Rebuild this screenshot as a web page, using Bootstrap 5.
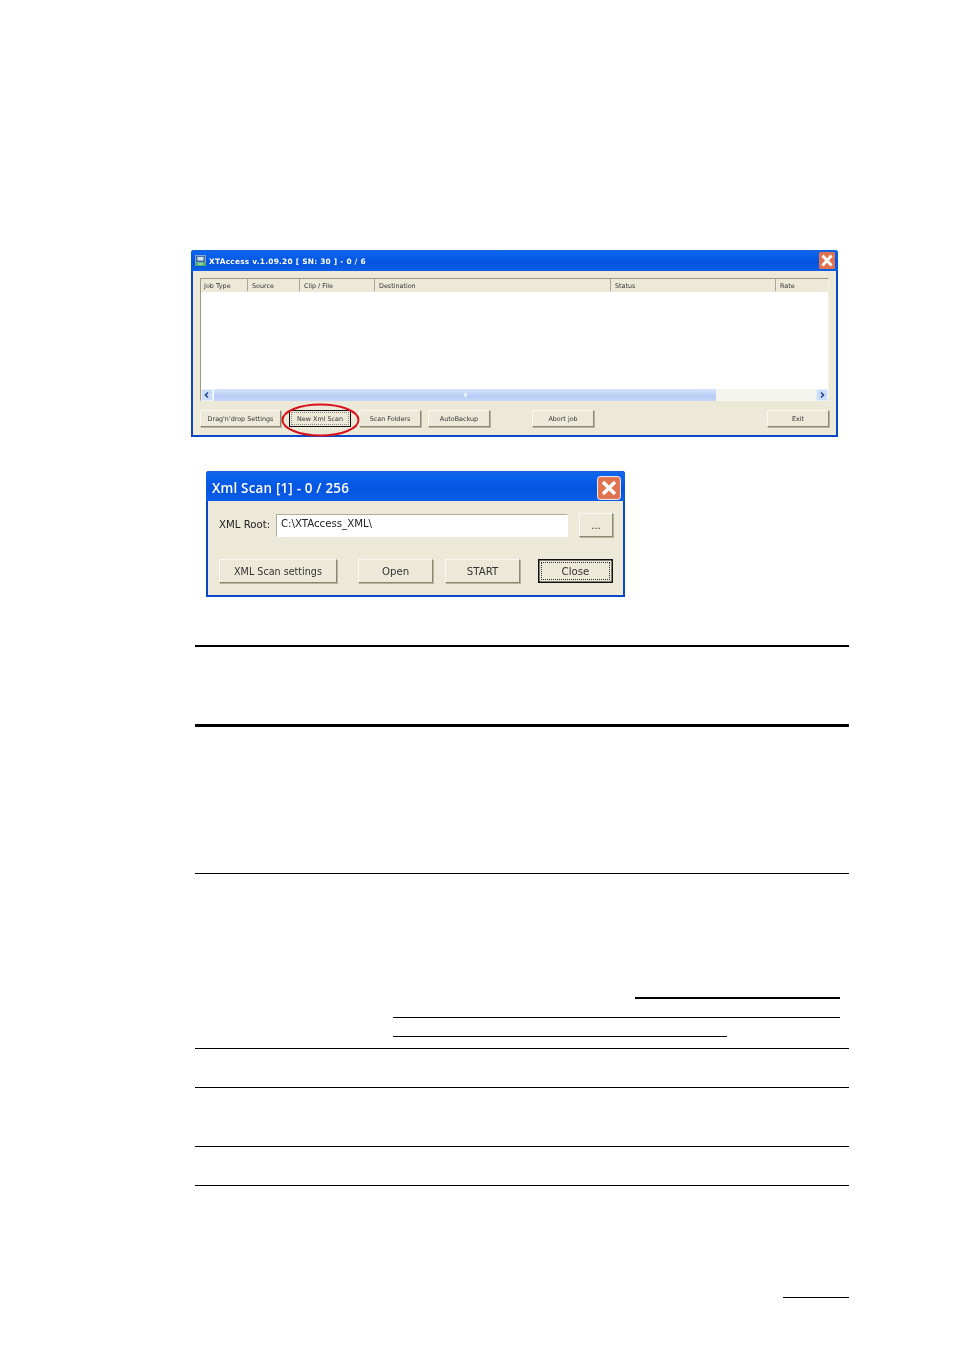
<!DOCTYPE html>
<html lang="en">
<head>
<meta charset="utf-8">
<title>XTAccess</title>
<link href="https://cdn.jsdelivr.net/npm/bootstrap@5.3.0/dist/css/bootstrap.min.css" rel="stylesheet">
<style>
body{background:#fff;margin:0;height:1350px;overflow:hidden;font-family:"DejaVu Sans","Liberation Sans",sans-serif;color:#222}
.sheet{padding-top:250px;padding-left:191px;width:954px}
.xpwin{background:#ece9d8;border:2px solid #0a46c8;border-top:0;border-radius:3px 3px 0 0;box-sizing:border-box}
.main-win{width:647px;height:187px;filter:blur(.35px)}
.scan-win{width:419px;height:126px;margin-top:34px;margin-left:15px;filter:blur(.25px)}
.xptitle{background:linear-gradient(180deg,#1a62d8 0,#0a64ee 12%,#0454e0 60%,#0a5fe8 100%);color:#fff;font-weight:700;margin:0 -2px}
.main-win .xptitle{height:21px;font-size:7.4px;letter-spacing:.25px;padding:0 3px 0 4px;gap:3px;border-radius:3px 3px 0 0}
.main-win .title-text{padding-top:2px}
.scan-win .xptitle{height:30px;font-family:"Open Sans","DejaVu Sans",sans-serif;font-size:13.4px;padding:0 3px 0 6px;border-radius:3px 3px 0 0;font-weight:600;letter-spacing:.2px}
.scan-win .title-text{padding-top:4px}
.title-text{white-space:nowrap}
.appicon{width:11px;height:11px;display:block}
.closebox{display:block}
.main-win .closebox{width:16px;height:17px}
.scan-win .closebox{width:24px;height:24px;margin-top:3px;margin-right:1px}
.listbox{margin:7px 7px 0 7px;height:123px;background:#fff;border:1px solid #9d9a86;border-right-color:#f4f2e6;border-bottom-color:#f4f2e6}
.listhead{height:13px;background:#ece9d8;font-size:6.4px;line-height:15px;color:#333}
.listhead span{border-right:1px solid #aca899;padding-left:3px;height:12px;white-space:nowrap;box-sizing:border-box}
.c1{width:47px}.c2{width:52px;padding-left:4px!important}.c3{width:75px;padding-left:4px!important}.c4{width:236px;padding-left:4px!important}.c5{width:165px;padding-left:4px!important}.c6{flex:1;border-right:0!important;padding-left:4px!important}
.listbody{height:97px}
.hscroll{height:12px;background:#f5f5f0}
.arrowbtn{width:12px;height:12px;background:#cddcf8;border:1px solid #e8effc}
.arrowbtn svg{display:block;width:10px;height:10px}
.thumbbar{width:503px;background:linear-gradient(180deg,#d8e4fb,#b8cdf6 60%,#c6d7f8);border-left:1px solid #fff}
.thumbgrip{width:3px;height:4px;background:#e6eefc;margin-left:250px}
.btnrow{padding:9px 0 0 7px}
.xpbtn{background:#ece9d8;border:1px solid #f7f6ef;border-right-color:#8b8874;border-bottom-color:#8b8874;border-radius:0;color:#333;padding:0;box-shadow:1px 1px 0 #b6b29c;text-align:center;white-space:nowrap;--bs-btn-active-bg:#ece9d8;--bs-btn-hover-bg:#ece9d8}
.main-win .xpbtn{height:17px;font-size:6.4px;line-height:17px;width:62px}
.wide-btn{width:81px!important;margin-right:8px}
.focus-btn{border:1px solid #111!important;margin-right:8px;box-shadow:none!important}
.gap-next{margin-right:7px}
.gap-abort{margin-left:42px}
.push-end{margin-left:173px}
.ringmark{position:absolute;left:281px;top:403px;width:79px;height:34px;pointer-events:none}
.dotted-in{display:block;border:1px dotted #8a8a80}
.focus-btn .dotted-in{margin:1px;height:13px;line-height:13px}
.b-close .dotted-in{margin:2px;height:18px;line-height:18px;border-color:#333}
.fieldrow{padding:12px 0 0 11px}
.fieldlbl{font-size:10.2px;width:57px;color:#222;white-space:nowrap}
.pathinput{width:292px;min-height:0;height:23px;line-height:18px;border-radius:0;border:1px solid #b0ac96;border-right-color:#fff;border-bottom-color:#fff;padding:0 4px;font-size:10.2px;color:#222;background:#fff;box-shadow:none}
.scan-win .xpbtn{height:24px;font-size:10.2px;line-height:23px}
.dots-btn{width:34px;margin-left:11px}
.scanbtns{padding:22px 0 0 11px}
.b-settings{width:118px;margin-right:21px;font-size:9.6px!important;line-height:24px!important}
.b-open{width:75px;margin-right:12px}
.b-start{width:75px;margin-right:18px}
.b-close{width:75px;border:1px solid #111!important;box-shadow:0 0 0 .5px #111 inset!important}
.rules{margin-top:48px;margin-left:4px;width:654px}
.rule{background:#000}
.r2{height:2px}
.r3{height:3px;margin-top:77px}
.r1a{height:1px;margin-top:146px}
.subrule-a{height:2px;width:205px;margin-left:440px;margin-top:123px}
.subrule-b{height:1px;width:447px;margin-left:198px;margin-top:18px}
.subrule-c{height:1px;width:334px;margin-left:198px;margin-top:18px}
.r1b{height:1px;margin-top:11px}
.r1c{height:1px;margin-top:38px}
.r1d{height:1px;margin-top:58px}
.r1e{height:1px;margin-top:38px}
.footrule{height:1px;width:66px;margin-left:588px;margin-top:111px}
</style>
</head>
<body>
<div class="sheet">
  <section class="xpwin main-win">
    <div class="xptitle d-flex align-items-center">
      <svg class="appicon" viewBox="0 0 11 11"><rect width="11" height="11" fill="#7fa6c8"/><rect x="1" y="1" width="9" height="6" fill="#3f6f9e"/><rect x="2.5" y="2" width="6" height="3.5" fill="#d6e2ec"/><rect x="0" y="7.5" width="11" height="3.5" fill="#4fae6a"/><rect x="3" y="8.5" width="5" height="1" fill="#d8efdc"/></svg>
      <span class="title-text flex-grow-1">XTAccess v.1.09.20 [ SN: 30 ] - 0 / 6</span>
      <svg class="closebox" viewBox="0 0 16 17"><rect width="16" height="17" rx="1.5" fill="#e0724e"/><path d="M3.5 3.5l9 10M12.500 3.500l-9 10" stroke="#fff" stroke-width="2.8"/></svg>
    </div>
    <div class="listbox">
      <div class="listhead d-flex"><span class="c1">Job Type</span><span class="c2">Source</span><span class="c3">Clip / File</span><span class="c4">Destination</span><span class="c5">Status</span><span class="c6">Rate</span></div>
      <div class="listbody"></div>
      <div class="hscroll d-flex">
        <div class="arrowbtn"><svg viewBox="0 0 10 10"><path d="M6 2.500L3.500 5 6 7.500" fill="none" stroke="#2a4a8a" stroke-width="1.600"/></svg></div>
        <div class="thumbbar d-flex align-items-center"><div class="thumbgrip"></div></div>
        <div class="flex-grow-1"></div>
        <div class="arrowbtn"><svg viewBox="0 0 10 10"><path d="M4 2.500L6.500 5 4 7.500" fill="none" stroke="#2a4a8a" stroke-width="1.600"/></svg></div>
      </div>
    </div>
    <div class="btnrow d-flex">
      <button class="btn xpbtn wide-btn">Drag'n'drop Settings</button>
      <button class="btn xpbtn focus-btn"><span class="dotted-in">New Xml Scan</span></button>
      <button class="btn xpbtn gap-next">Scan Folders</button>
      <button class="btn xpbtn">AutoBackup</button>
      <button class="btn xpbtn gap-abort">Abort job</button>
      <button class="btn xpbtn push-end">Exit</button>
    </div>
  </section>
  <section class="xpwin scan-win">
    <div class="xptitle d-flex align-items-center justify-content-between">
      <span class="title-text">Xml Scan [1] - 0 / 256</span>
      <svg class="closebox" viewBox="0 0 24 24"><rect x=".6" y=".6" width="22.800" height="22.800" rx="2.500" fill="#e0724e" stroke="#f6f0ea"/><path d="M6 6l12 12M18 6L6 18" stroke="#fff" stroke-width="3.600"/></svg>
    </div>
    <div class="fieldrow d-flex align-items-center">
      <span class="fieldlbl">XML Root:</span>
      <div class="form-control pathinput">C:\XTAccess_XML\</div>
      <button class="btn xpbtn dots-btn">...</button>
    </div>
    <div class="scanbtns d-flex">
      <button class="btn xpbtn b-settings">XML Scan settings</button>
      <button class="btn xpbtn b-open">Open</button>
      <button class="btn xpbtn b-start">START</button>
      <button class="btn xpbtn b-close"><span class="dotted-in">Close</span></button>
    </div>
  </section>
  <div class="rules">
    <div class="rule r2"></div>
    <div class="rule r3"></div>
    <div class="rule r1a"></div>
    <div class="rule subrule-a"></div>
    <div class="rule subrule-b"></div>
    <div class="rule subrule-c"></div>
    <div class="rule r1b"></div>
    <div class="rule r1c"></div>
    <div class="rule r1d"></div>
    <div class="rule r1e"></div>
    <div class="rule footrule"></div>
  </div>
</div>
<svg class="ringmark" viewBox="0 0 79 34"><ellipse cx="39.500" cy="17" rx="38" ry="15.600" fill="none" stroke="#d8121c" stroke-width="2"/></svg>
<script src="https://cdn.jsdelivr.net/npm/bootstrap@5.3.0/dist/js/bootstrap.bundle.min.js"></script>
</body>
</html>
